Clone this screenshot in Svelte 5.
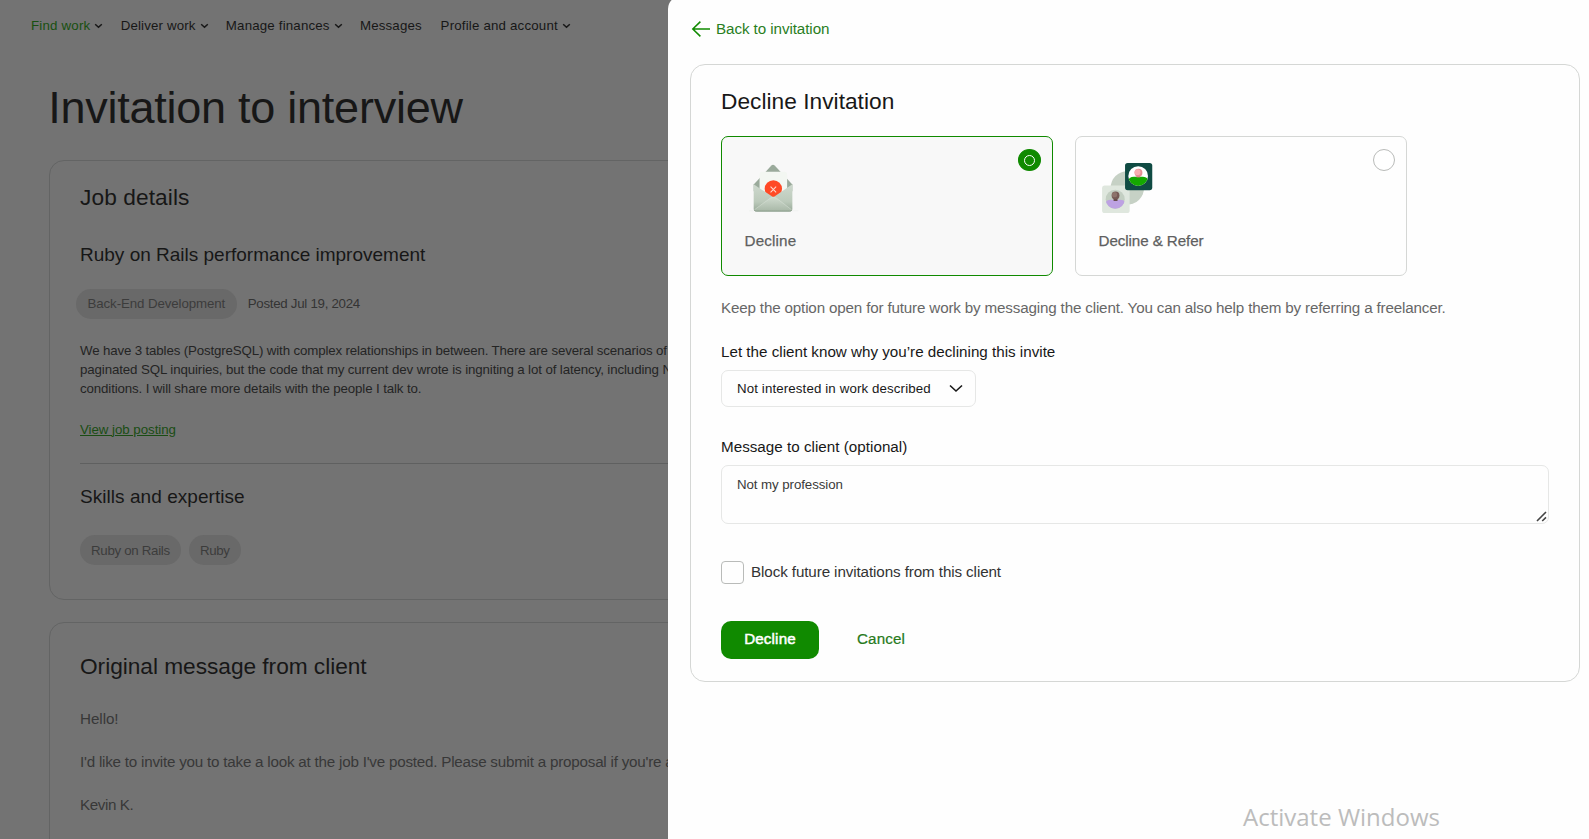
<script>
  const nav = [
    { label: 'Find work', menu: true, active: true, space: 0.2 },
    { label: 'Deliver work', menu: true, space: 0.14 },
    { label: 'Manage finances', menu: true, space: 0.17 },
    { label: 'Messages', menu: false, space: 0.15 },
    { label: 'Profile and account', menu: true, space: 0.18 }
  ];
  const skills = ['Ruby on Rails', 'Ruby'];
  let choice = $state('decline');
  let message = $state('Not my profession');
</script>

<div class="screen">
  <div class="page">
    <nav>
      {#each nav as item}
        <a class="nav-item" class:active={item.active} class:plain={!item.menu} style="letter-spacing:{item.space}px">
          {item.label}
          {#if item.menu}
            <svg width="9" height="6" viewBox="0 0 9 6" fill="none"><path d="M1.2 1.2 4.5 4.3 7.8 1.2" stroke="#171717" stroke-width="1.5" /></svg>
          {/if}
        </a>
      {/each}
    </nav>

    <main>
      <h1>Invitation to interview</h1>
      <section class="card">
        <h2 class="details">Job details</h2>
        <h3>Ruby on Rails performance improvement</h3>
        <div class="meta">
          <span class="chip wide">Back-End Development</span>
          <span class="posted">Posted Jul 19, 2024</span>
        </div>
        <div class="description">
          <span class="l1">We have 3 tables (PostgreSQL) with complex relationships in between. There are several scenarios of</span>
          <span class="l2">paginated SQL inquiries, but the code that my current dev wrote is ingniting a lot of latency, including N+1</span>
          <span class="l3">conditions. I will share more details with the people I talk to.</span>
        </div>
        <a class="view">View job posting</a>
        <hr />
        <h3 class="skills-title">Skills and expertise</h3>
        <div class="skills">
          {#each skills as s}<span class="chip skill">{s}</span>{/each}
        </div>
      </section>

      <section class="card original">
        <h2>Original message from client</h2>
        <p class="hello">Hello!</p>
        <p>I'd like to invite you to take a look at the job I've posted. Please submit a proposal if you're available</p>
        <p class="sign">Kevin K.</p>
      </section>
    </main>
  </div>

  <aside class="panel">
    <a class="back">
      <svg width="20" height="18" viewBox="0 0 20 18" fill="none"><path d="M9.4 1.6 1.8 9l7.6 7.4M2 9h17" stroke="#108a00" stroke-width="1.5" /></svg>
      <span>Back to invitation</span>
    </a>

    <form class="sheet">
      <h2>Decline Invitation</h2>

      <div class="options">
        <div class="option" class:selected={choice === 'decline'}>
          <svg width="60" height="60" viewBox="42 30 180 180">
            <defs>
              <linearGradient id="body" x1="0" y1="0" x2="0" y2="1">
                <stop offset="0" stop-color="#ced9ce" />
                <stop offset="0.65" stop-color="#bccabb" />
                <stop offset="1" stop-color="#98a998" />
              </linearGradient>
              <linearGradient id="flap" x1="0" y1="0" x2="0" y2="1">
                <stop offset="0" stop-color="#d0dbcf" />
                <stop offset="1" stop-color="#a8b8a7" />
              </linearGradient>
            </defs>
            <path d="M56 185h150" stroke="#ecefec" stroke-width="2" />
            <path d="M70 105 124 47q5-5 10 0l54 58v20H70z" fill="#9aaa9b" />
            <path d="M88 74q0-8 8-8h68q8 0 8 8v62H88z" fill="#f3f7f2" />
            <circle cx="130" cy="118" r="26.500" fill="#ff4a26" />
            <path d="m121.500 111.500 17 17m0-17-17 17" stroke="#ffd9d0" stroke-width="3.200" />
            <path d="M70 104 130 144l58-40v76q0 6-6 6H76q-6 0-6-6z" fill="url(#body)" />
            <path d="M71 183 121 146q9-6 18 0l48 37q-2 3-6 3H77q-4 0-6-3z" fill="url(#flap)" />
            <path d="M72 182 121 146q9-6 18 0l47 36" fill="none" stroke="#dce4db" stroke-width="1.500" />
            <path d="M72 183q2 3 6 3h102q4 0 6-3" fill="none" stroke="#829483" stroke-width="2.500" />
          </svg>
          <span class="name spaced">Decline</span>
          <span class="radio"></span>
        </div>

        <div class="option" class:selected={choice === 'refer'}>
          <svg width="60" height="60" viewBox="54 30 180 180">
            <defs>
              <clipPath id="dark-face"><circle cx="175" cy="79" r="30" /></clipPath>
              <clipPath id="light-face"><circle cx="105" cy="150" r="29" /></clipPath>
            </defs>
            <circle cx="142" cy="115" r="51" fill="#c6d1c5" />
            <rect x="65" y="108" width="84" height="84" rx="8" fill="#dfe7de" />
            <circle cx="105" cy="150" r="29" fill="#c3cfc2" />
            <g clip-path="url(#light-face)">
              <path d="M74 163q2-12 18-12h28q15 0 17 12v20H74z" fill="#bda2e2" />
            </g>
            <path d="M100 145h12v10h-12z" fill="#644b48" />
            <circle cx="106" cy="138" r="12" fill="#755a55" />
            <circle cx="103" cy="136" r="8" fill="#8d736b" />
            <rect x="135" y="39" width="83" height="83" rx="8" fill="#104b43" />
            <circle cx="175" cy="79" r="30" fill="#ffffff" />
            <g clip-path="url(#dark-face)">
              <path d="M144 95q2-14 18-14h27q15 0 18 14v20h-63z" fill="#14a800" />
            </g>
            <path d="M170 74h11v9h-11z" fill="#d87c83" />
            <circle cx="176" cy="69" r="12" fill="#e58f94" />
            <circle cx="173" cy="67" r="9" fill="#f7aeb0" />
          </svg>
          <span class="name">Decline &amp; Refer</span>
          <span class="radio"></span>
        </div>
      </div>

      <p class="hint">Keep the option open for future work by messaging the client. You can also help them by referring a freelancer.</p>

      <div class="label">Let the client know why you’re declining this invite</div>
      <div class="select">
        <span>Not interested in work described</span>
        <svg width="14" height="9" viewBox="0 0 14 9" fill="none"><path d="M1 1.500 7 7l6-5.500" stroke="#181818" stroke-width="1.600" /></svg>
      </div>

      <div class="label second">Message to client (optional)</div>
      <div class="area">
        <span>{message}</span>
        <svg class="grip" width="11" height="11" viewBox="0 0 11 11"><path d="M1 10 10 1M6.200 10 10 6.400" stroke="#444" stroke-width="1.600" /></svg>
      </div>

      <label class="block"><span class="box"></span><span class="box-text">Block future invitations from this client</span></label>

      <div class="actions">
        <button type="button" class="primary">Decline</button>
        <button type="button" class="cancel">Cancel</button>
      </div>
    </form>
  </aside>

  <div class="watermark">Activate Windows</div>
</div>

<style>
  :global(body) { margin: 0; overflow: hidden; }
  .screen {
    position: relative;
    width: 1589px;
    height: 839px;
    overflow: hidden;
    background: #737373;
    font-family: "Liberation Sans", Arial, sans-serif;
    box-sizing: border-box;
    white-space: nowrap;
  }
  .screen :global(*) { box-sizing: border-box; }
  h1, h2, h3, p { margin: 0; font-weight: 400; }

  .page { color: #171717; }
  nav { display: flex; height: 51px; align-items: center; padding-left: 31px; gap: 17.3px; }
  .nav-item { display: flex; align-items: center; gap: 4px; font-size: 13.3px; line-height: 20px; }
  .nav-item.active { color: #185010; }
  .nav-item.plain { margin-right: 1.5px; }
  main { padding: 29px 0 0 49px; width: 1500px; }
  h1 { font-size: 45px; line-height: 55px; letter-spacing: -0.25px; margin: 0 0 25px -0.8px; }
  .card { border: 1px solid #636464; border-radius: 15px; padding: 22px 30px 34px; height: 440px; }
  h2 { font-size: 22.7px; line-height: 28px; letter-spacing: -0.03px; }
  .details { letter-spacing: 0.1px; }
  h3 { font-size: 19px; line-height: 24px; margin-top: 32px; }
  .meta { display: flex; align-items: center; margin: 22px 0 0 -4px; gap: 11px; }
  .chip {
    height: 30px;
    padding: 0 11px;
    border-radius: 15px;
    background: #696969;
    color: #3c3c3c;
    font-size: 13.3px;
    line-height: 30px;
    letter-spacing: -0.3px;
  }
  .chip.skill { line-height: 32px; }
  .chip.wide { letter-spacing: -0.1px; padding: 0 11.5px; }
  .posted { font-size: 13.3px; line-height: 20px; padding-bottom: 1px; letter-spacing: -0.28px; color: #343434; }
  .description { display: flex; flex-direction: column; margin-top: 22px; font-size: 13.3px; line-height: 19.2px; color: #242424; }
  .l1 { letter-spacing: -0.145px; }
  .l2 { letter-spacing: -0.113px; }
  .l3 { letter-spacing: -0.13px; }
  .view { display: block; margin-top: 21px; font-size: 13.3px; line-height: 20px; letter-spacing: -0.04px; color: #1a4d14; text-decoration: underline; }
  hr { border: 0; height: 1px; background: #5f6060; margin: 23px 0 0; }
  .skills-title { margin-top: 21px; letter-spacing: 0.05px; }
  .skills { display: flex; gap: 8px; margin-top: 26px; }
  .original { margin-top: 22px; padding-top: 29px; }
  .original p { font-size: 15.2px; line-height: 23px; margin-top: 20px; letter-spacing: -0.218px; color: #383838; }
  .original .hello { margin-top: 27px; letter-spacing: -0.05px; }
  .original .sign { letter-spacing: -0.4px; }

  .panel {
    position: absolute;
    left: 668px;
    top: -4px;
    width: 921px;
    height: 850px;
    padding: 21px 9px 0 22px;
    border-radius: 13px 0 0 0;
    background: #fefefe;
    color: #181818;
  }
  .back { display: flex; align-items: center; gap: 5px; height: 24px; padding-left: 1px; color: #2a7f1e; font-size: 15.2px; letter-spacing: -0.08px; }
  .back span { padding-bottom: 2px; }
  .sheet { margin-top: 23px; border: 1px solid #d5d7d5; border-radius: 15px; padding: 22px 30px; height: 618px; }
  .sheet h2 { letter-spacing: 0.03px; }
  .options { display: flex; gap: 22px; margin-top: 21px; }
  .option {
    position: relative;
    display: flex;
    flex-direction: column;
    gap: 10px;
    width: 332px;
    height: 140px;
    padding: 23px 22px;
    border: 1px solid #d5d7d5;
    border-radius: 7px;
  }
  .option.selected { border-color: #108a00; background: #f8f8f8; }
  .name { padding-left: 0.6px; font-size: 15.2px; line-height: 23px; letter-spacing: -0.1px; color: #5e6060; -webkit-text-stroke: 0.25px #5e6060; }
  .name.spaced { letter-spacing: 0.14px; }
  .radio { position: absolute; top: 12px; right: 11px; width: 22px; height: 22px; border: 1px solid #b9bbb9; border-radius: 50%; display: grid; place-items: center; background: #fff; }
  .selected .radio { width: 23px; background: #108a00; border-color: #108a00; }
  .selected .radio::after { content: ''; width: 11px; height: 11px; border: 1px solid #fff; border-radius: 50%; box-sizing: border-box; }
  .hint { margin-top: 20px; font-size: 15.2px; line-height: 23px; letter-spacing: -0.165px; color: #676767; }
  .label { margin-top: 21px; font-size: 15.2px; line-height: 23px; letter-spacing: 0; }
  .label.second { margin-top: 28px; letter-spacing: 0.02px; }
  .select {
    display: flex;
    align-items: center;
    justify-content: space-between;
    width: 255px;
    height: 37px;
    margin-top: 7px;
    padding: 0 12px 0 15px;
    border: 1px solid #e6e7e6;
    border-radius: 7px;
    font-size: 13.3px;
    letter-spacing: 0.12px;
  }
  .area { position: relative; height: 59px; margin-top: 7px; padding: 9px 15px; border: 1px solid #e6e7e6; border-radius: 7px; font-size: 13.3px; line-height: 19px; letter-spacing: -0.08px; color: #3a3a3a; }
  .area span { display: block; }
  .grip { position: absolute; right: 1px; bottom: 1px; }
  .block { display: flex; align-items: center; gap: 7px; margin-top: 37px; height: 23px; font-size: 15.2px; letter-spacing: -0.1px; color: #333; }
  .box { width: 23px; height: 23px; border: 1px solid #b9bbb9; border-radius: 4px; }
  .box-text { padding-bottom: 2px; }
  .actions { display: flex; gap: 38px; margin-top: 37px; }
  button { height: 38px; border: 0; padding: 0 0 4px; background: none; font-family: inherit; font-size: 15.2px; }
  .primary { width: 98px; border-radius: 10px; background: #108a00; color: #fff; letter-spacing: 0.14px; -webkit-text-stroke: 0.5px #fff; }
  .cancel { color: #277a1c; letter-spacing: 0.12px; -webkit-text-stroke: 0.2px #277a1c; }
  .watermark { position: absolute; left: 1243px; top: 801px; font: 24px/32px "Open Sans", "Noto Sans", sans-serif; color: #bcbcbc; }
</style>
